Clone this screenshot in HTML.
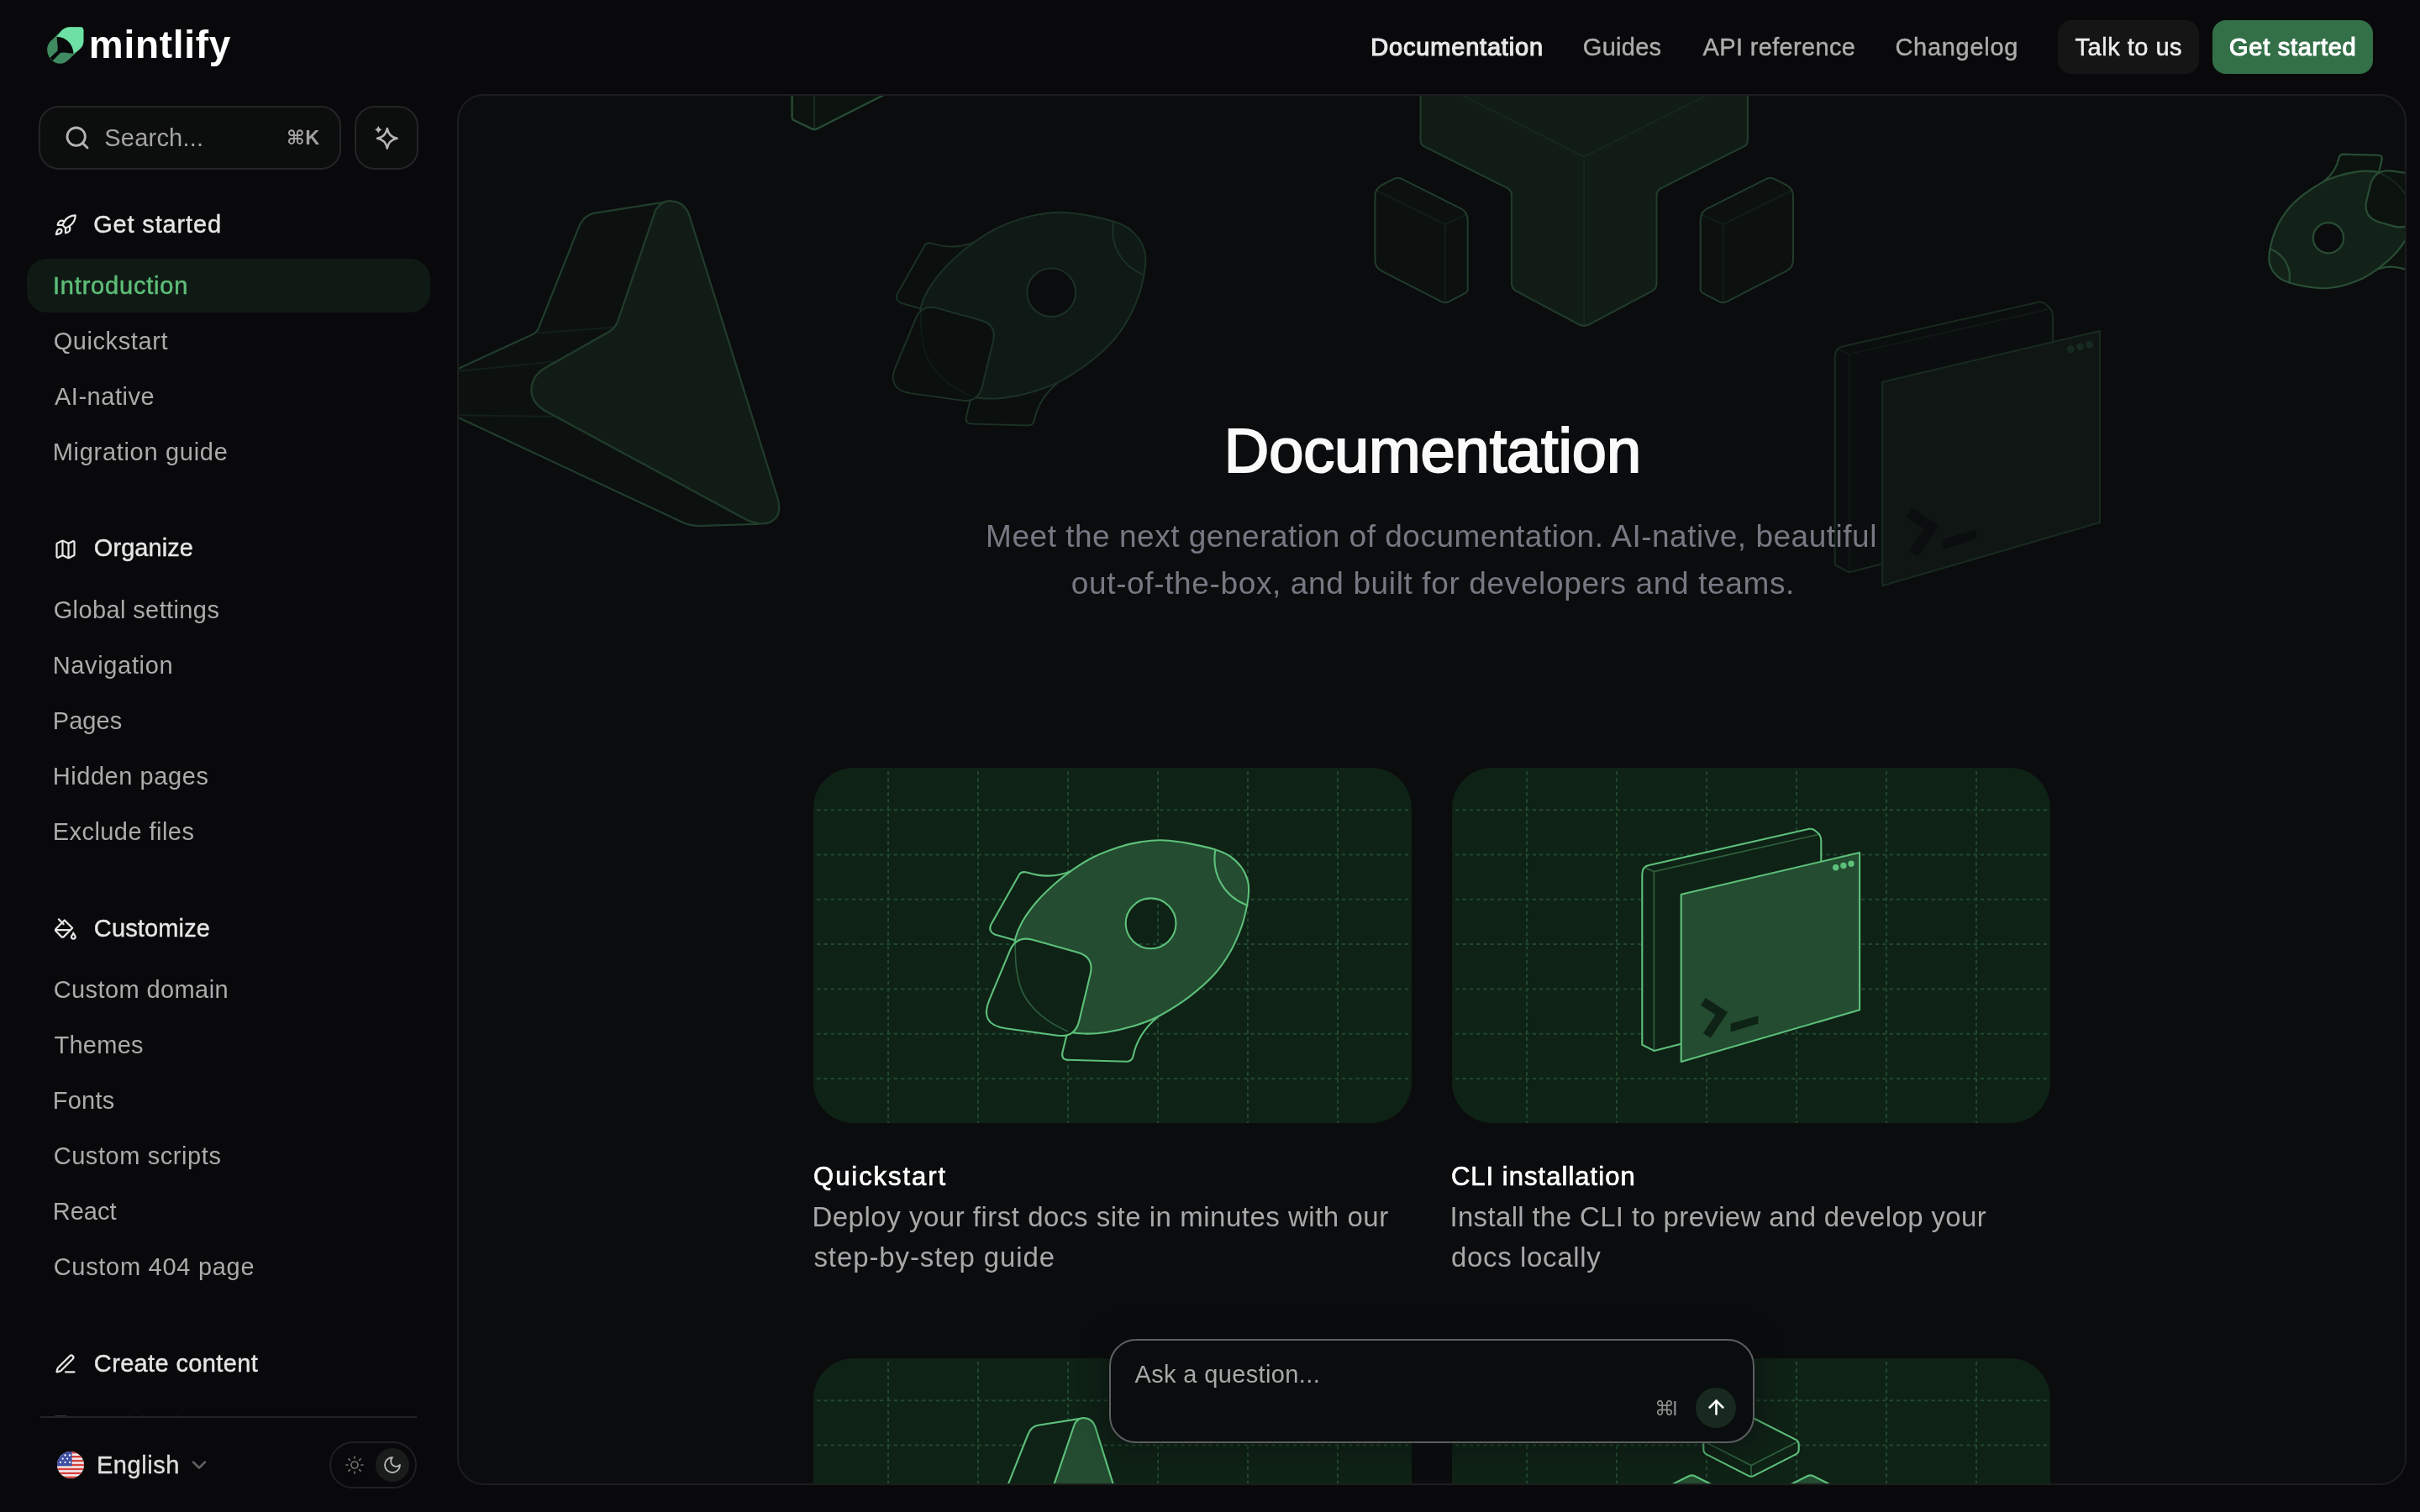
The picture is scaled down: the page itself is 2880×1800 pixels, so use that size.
<!DOCTYPE html>
<html lang="en">
<head>
<meta charset="utf-8">
<title>Introduction - Mintlify</title>
<style>

*{box-sizing:border-box;margin:0;padding:0}
html,body{width:2880px;height:1800px;overflow:hidden;background:#09090b}
body{position:relative;font-family:"Liberation Sans","DejaVu Sans",sans-serif;color:#9c9c9c}
a{text-decoration:none}
ul{list-style:none}
h1,h2,h5,p,li{font-weight:400}
.t{position:absolute;white-space:nowrap;line-height:1;display:block}
svg{position:absolute;display:block;overflow:visible}
.ic{fill:none;stroke-linecap:round;stroke-linejoin:round}
header.top,aside.side,.pc{position:absolute;left:0;top:0;width:0;height:0;will-change:transform}
.pc{left:-546px;top:-114px}
.btn{position:absolute;top:24px;height:64px;border-radius:16px}
.btn.talk{left:2449px;width:168px;background:#151516}
.btn.start{left:2633px;width:191px;background:#336f47}
.search{position:absolute;left:46px;top:126px;width:360px;height:76px;border:2px solid #242528;border-radius:24px;background:#0c0d0d}
.aibtn{position:absolute;left:422px;top:126px;width:76px;height:76px;border:2px solid #242528;border-radius:24px;background:#0c0d0d}
.kbd{font-size:23.5px;font-weight:700;color:#a0a0a0;letter-spacing:.4px}
.pill{position:absolute;left:32px;top:308px;width:480px;height:64px;border-radius:24px;background:#101a15}
.sidefoot{position:absolute;left:0;top:1686px;width:544px;height:114px;background:#09090b}
.rule{position:absolute;left:48px;top:1686px;width:448px;height:2px;background:#222326}
.toggle{position:absolute;left:392px;top:1716px;width:104px;height:56px;border:2px solid #1f2022;border-radius:28px}
.moonbg{position:absolute;left:447px;top:1724px;width:40px;height:40px;border-radius:50%;background:#1a1c1c}
main.panel{position:absolute;left:544px;top:112px;width:2320px;height:1656px;border:2px solid #1c1d1f;border-radius:32px;background:#0b0c0e;overflow:hidden}
.ask{position:absolute;left:1320px;top:1594px;width:768px;height:124px;border:2px solid #5c5e60;border-radius:32px;background:#0a0d0e;box-shadow:0 0 28px 6px rgba(9,12,13,.5)}
.kbd2{font-size:24px;font-weight:400;color:#8c8c8c;letter-spacing:-3px}
.send{position:absolute;left:2018px;top:1652px;width:48px;height:48px;border-radius:50%;background:#182a1f}

</style>
</head>
<body>
<header class="top">
<svg style="left:48px;top:24px" width="64" height="60" viewBox="0 0 1613 1512"><path d="M205 850C215 730 280 640 380 560L640 310C720 235 790 205 880 205H1200C1265 205 1295 240 1295 300V610C1295 720 1270 790 1190 860L930 1110C830 1220 720 1305 600 1305C380 1305 195 1110 205 850Z" fill="#3f8a61"/><path d="M490 500L640 310C720 235 790 205 880 205H1200C1265 205 1295 240 1295 300V610C1295 720 1270 790 1190 860L1000 1010C990 760 780 500 490 500Z" fill="#6de0a4"/><path d="M500 505C780 505 990 740 990 1000C870 1000 720 940 600 985L370 1215L290 1130L510 925C545 800 490 680 500 505Z" fill="#09090b"/></svg>
<a class="t logo" style="left:105.83px;top:30.00px;font-size:46px;letter-spacing:0.717px;color:#ffffff;font-weight:700;">mintlify</a>
<nav>
<a class="t" style="left:1631.33px;top:41.50px;font-size:29px;letter-spacing:0.803px;color:#e8e8e8;-webkit-text-stroke:1.2px #e8e8e8;">Documentation</a>
<a class="t" style="left:1883.84px;top:41.50px;font-size:29px;letter-spacing:0.276px;color:#adadad;-webkit-text-stroke:0.4px #adadad;">Guides</a>
<a class="t" style="left:2026.60px;top:41.50px;font-size:29px;letter-spacing:0.338px;color:#adadad;-webkit-text-stroke:0.4px #adadad;">API reference</a>
<a class="t" style="left:2255.44px;top:41.50px;font-size:29px;letter-spacing:0.713px;color:#adadad;-webkit-text-stroke:0.4px #adadad;">Changelog</a>
</nav>
<div class="btn talk"></div><a class="t" style="left:2469.60px;top:41.50px;font-size:29px;letter-spacing:0.496px;color:#ededed;-webkit-text-stroke:0.5px #ededed;">Talk to us</a>
<div class="btn start"></div><a class="t" style="left:2653.04px;top:41.50px;font-size:29px;letter-spacing:0.723px;color:#ffffff;-webkit-text-stroke:1.2px #ffffff;">Get started</a>
</header>
<aside class="side">
<div class="search"></div><svg class="ic" style="left:76.1px;top:148.0px" width="32" height="32" viewBox="0 0 24 24" stroke="#b5b5b5" stroke-width="2.1"><circle cx="11" cy="11" r="8"/><path d="m21 21-4.3-4.3"/></svg>
<div class="t" style="left:124.19px;top:149.50px;font-size:29px;letter-spacing:0.234px;color:#a5a5a5;">Search...</div>
<div class="t kbd" style="left:341px;top:153px;">⌘K</div>
<div class="aibtn"></div><svg style="left:0;top:0" width="2880" height="1800" viewBox="0 0 2880 1800"><path d="M460.8 153.0C462.0 159.5 466.1 163.6 472.6 164.8C466.1 166.0 462.0 170.1 460.8 176.6C459.6 170.1 455.5 166.0 449.0 164.8C455.5 163.6 459.6 159.5 460.8 153.0Z" fill="none" stroke="#b4b4b4" stroke-width="2.6" stroke-linejoin="round"/><path d="M450.3 149.7C450.8 151.9 452.7 153.8 454.9 154.3C452.7 154.8 450.8 156.7 450.3 158.9C449.8 156.7 447.9 154.8 445.7 154.3C447.9 153.8 449.8 151.9 450.3 149.7Z" fill="#b4b4b4"/></svg>
<div class="pill"></div>
<svg class="ic" style="left:64px;top:254px" width="28" height="28" viewBox="0 0 24 24" stroke="#e6e6e6" stroke-width="1.9"><path d="M4.5 16.5c-1.5 1.26-2 5-2 5s3.74-.5 5-2c.71-.84.7-2.13-.09-2.91a2.18 2.18 0 0 0-2.91-.09z"/><path d="m12 15-3-3a22 22 0 0 1 2-3.95A12.88 12.88 0 0 1 22 2c0 2.72-.78 7.5-6 11a22.35 22.35 0 0 1-4 2z"/><path d="M9 12H4s.55-3.03 2-4c1.62-1.08 5 0 5 0"/><path d="M12 15v5s3.03-.55 4-2c1.08-1.62 0-5 0-5"/></svg><h5 class="t" style="left:111.24px;top:252.50px;font-size:29px;letter-spacing:0.833px;color:#e6e6e6;-webkit-text-stroke:0.4px #e6e6e6;">Get started</h5>
<ul>
<li class="t" style="left:62.98px;top:325.50px;font-size:29px;letter-spacing:0.805px;color:#5dbe78;-webkit-text-stroke:0.5px #5dbe78;">Introduction</li>
<li class="t" style="left:63.64px;top:391.50px;font-size:29px;letter-spacing:0.592px;color:#ababab;">Quickstart</li>
<li class="t" style="left:65.00px;top:457.50px;font-size:29px;letter-spacing:0.517px;color:#ababab;">AI-native</li>
<li class="t" style="left:62.73px;top:523.50px;font-size:29px;letter-spacing:0.697px;color:#ababab;">Migration guide</li>
</ul>
<svg class="ic" style="left:64px;top:640px" width="28" height="28" viewBox="0 0 24 24" stroke="#e6e6e6" stroke-width="1.9"><path d="M14.106 5.553a2 2 0 0 0 1.788 0l3.659-1.83A1 1 0 0 1 21 4.619v12.764a1 1 0 0 1-.553.894l-4.553 2.277a2 2 0 0 1-1.788 0l-4.212-2.106a2 2 0 0 0-1.788 0l-3.659 1.83A1 1 0 0 1 3 19.381V6.618a1 1 0 0 1 .553-.894l4.553-2.277a2 2 0 0 1 1.788 0z"/><path d="M15 5.764v15"/><path d="M9 3.236v15"/></svg><h5 class="t" style="left:111.84px;top:637.50px;font-size:29px;letter-spacing:0.066px;color:#e6e6e6;-webkit-text-stroke:0.4px #e6e6e6;">Organize</h5>
<ul>
<li class="t" style="left:63.64px;top:711.50px;font-size:29px;letter-spacing:0.388px;color:#ababab;">Global settings</li>
<li class="t" style="left:62.73px;top:777.50px;font-size:29px;letter-spacing:0.652px;color:#ababab;">Navigation</li>
<li class="t" style="left:62.73px;top:843.50px;font-size:29px;letter-spacing:0.086px;color:#ababab;">Pages</li>
<li class="t" style="left:62.73px;top:909.50px;font-size:29px;letter-spacing:0.564px;color:#ababab;">Hidden pages</li>
<li class="t" style="left:62.73px;top:975.50px;font-size:29px;letter-spacing:0.448px;color:#ababab;">Exclude files</li>
</ul>
<svg class="ic" style="left:64px;top:1092px" width="28" height="28" viewBox="0 0 24 24" stroke="#e6e6e6" stroke-width="1.9"><path d="m19 11-8-8-8.6 8.6a2 2 0 0 0 0 2.8l5.2 5.2c.8.8 2 .8 2.8 0L19 11Z"/><path d="m5 2 5 5"/><path d="M2 13h15"/><path d="M22 20a2 2 0 1 1-4 0c0-1.6 1.7-2.4 2-4 .3 1.6 2 2.4 2 4Z"/></svg><h5 class="t" style="left:111.84px;top:1090.50px;font-size:29px;letter-spacing:0.144px;color:#e6e6e6;-webkit-text-stroke:0.4px #e6e6e6;">Customize</h5>
<ul>
<li class="t" style="left:63.64px;top:1163.50px;font-size:29px;letter-spacing:0.409px;color:#ababab;">Custom domain</li>
<li class="t" style="left:64.55px;top:1229.50px;font-size:29px;letter-spacing:0.241px;color:#ababab;">Themes</li>
<li class="t" style="left:62.73px;top:1295.50px;font-size:29px;letter-spacing:0.261px;color:#ababab;">Fonts</li>
<li class="t" style="left:63.64px;top:1361.50px;font-size:29px;letter-spacing:0.578px;color:#ababab;">Custom scripts</li>
<li class="t" style="left:62.73px;top:1427.50px;font-size:29px;letter-spacing:0.002px;color:#ababab;">React</li>
<li class="t" style="left:63.64px;top:1493.50px;font-size:29px;letter-spacing:0.715px;color:#ababab;">Custom 404 page</li>
</ul>
<svg class="ic" style="left:64px;top:1610px" width="28" height="28" viewBox="0 0 24 24" stroke="#e6e6e6" stroke-width="1.9"><path d="M12 20h9"/><path d="M16.376 3.622a1 1 0 0 1 3.002 3.002L7.368 18.635a2 2 0 0 1-.855.506l-2.872.838a.5.5 0 0 1-.62-.62l.838-2.872a2 2 0 0 1 .506-.854z"/></svg><h5 class="t" style="left:111.84px;top:1608.50px;font-size:29px;letter-spacing:0.356px;color:#e6e6e6;-webkit-text-stroke:0.4px #e6e6e6;">Create content</h5>
<ul><li class="t" style="left:63px;top:1681px;font-size:29px;letter-spacing:.5px;color:#9c9c9c;opacity:.3">Format text</li></ul>
<div class="sidefoot"></div>
<div class="rule"></div>
<svg style="left:68px;top:1728px" width="32" height="32" viewBox="0 0 32 32"><defs><clipPath id="fc"><circle cx="16" cy="16" r="16"/></clipPath></defs><g clip-path="url(#fc)"><rect width="32" height="32" fill="#f0f0f0"/><rect x="0" y="0.00" width="32" height="2.46" fill="#d8413f"/><rect x="0" y="4.92" width="32" height="2.46" fill="#d8413f"/><rect x="0" y="9.85" width="32" height="2.46" fill="#d8413f"/><rect x="0" y="14.77" width="32" height="2.46" fill="#d8413f"/><rect x="0" y="19.69" width="32" height="2.46" fill="#d8413f"/><rect x="0" y="24.62" width="32" height="2.46" fill="#d8413f"/><rect x="0" y="29.54" width="32" height="2.46" fill="#d8413f"/><rect x="0" y="0" width="17.5" height="17.2" fill="#3c4fa3"/><circle cx="4" cy="4.5" r="1.15" fill="#fff"/><circle cx="9.5" cy="4.5" r="1.15" fill="#fff"/><circle cx="15" cy="4.5" r="1.15" fill="#fff"/><circle cx="6.7" cy="8.6" r="1.15" fill="#fff"/><circle cx="12.2" cy="8.6" r="1.15" fill="#fff"/><circle cx="4" cy="12.8" r="1.15" fill="#fff"/><circle cx="9.5" cy="12.8" r="1.15" fill="#fff"/><circle cx="15" cy="12.8" r="1.15" fill="#fff"/></g></svg>
<div class="t" style="left:114.93px;top:1729.50px;font-size:29px;letter-spacing:0.563px;color:#dddddd;-webkit-text-stroke:0.4px #dddddd;">English</div>
<svg class="ic" style="left:223px;top:1730px" width="28" height="28" viewBox="0 0 24 24" stroke="#5f5f5f" stroke-width="2.2"><path d="m6 9 6 6 6-6"/></svg>
<div class="toggle"></div><span class="moonbg"></span><svg class="ic" style="left:410px;top:1732px" width="24" height="24" viewBox="0 0 24 24" stroke="#707070" stroke-width="1.7"><circle cx="12" cy="12" r="4"/><path d="M12 2v2"/><path d="M12 20v2"/><path d="m4.93 4.93 1.41 1.41"/><path d="m17.66 17.66 1.41 1.41"/><path d="M2 12h2"/><path d="M20 12h2"/><path d="m6.34 17.66-1.41 1.41"/><path d="m19.07 4.93-1.41 1.41"/></svg><svg class="ic" style="left:455px;top:1732px" width="24" height="24" viewBox="0 0 24 24" stroke="#b8b8b8" stroke-width="1.8"><path d="M12 3a6 6 0 0 0 9 9 9 9 0 1 1-9-9Z"/></svg>
</aside>
<main class="panel">
<div class="pc">
<svg style="left:0;top:0" width="2880" height="1800" viewBox="0 0 2880 1800"><defs><linearGradient id="fd" gradientUnits="userSpaceOnUse" x1="0" y1="360" x2="0" y2="720"><stop offset="0" stop-color="#fff" stop-opacity="1"/><stop offset="1" stop-color="#fff" stop-opacity=".12"/></linearGradient><mask id="mfd" maskUnits="userSpaceOnUse" x="2100" y="300" width="500" height="500"><rect x="2100" y="300" width="500" height="500" fill="url(#fd)"/></mask></defs><g opacity=".27"><path d="M798.8 239.3L707.8 253.6Q694 256 687.9 272.6L640.9 390.6Q639 395.5 634 398L440 487.6L440 447.8L807.3 619.5Q818 625.5 830.1 626.1L902.6 623.8L920 600L810 250Z" fill="#0f2216" stroke="#5dc07a" stroke-width="2.2" stroke-linejoin="round" stroke-linecap="round"/><path d="M639.5 396.3L729.1 389.8M440 452.4L659.4 430.4M440 492.7L659.4 495.8" fill="none" stroke="#5dc07a" stroke-opacity=".35" stroke-width="1.76"/><path d="M780.3 249.9Q789 238 798.8 239.3Q814 240 820.1 255.5L925.3 592.5Q930 607 923.9 616Q916 625 902.6 623.2Q895 622 888 618.5L648.1 488.7Q632 479 632.4 463.1Q633 447 649.5 437.5L722 396.5Q731 392 734.8 383.5Z" fill="#234c31" stroke="#5dc07a" stroke-width="2.2" stroke-linejoin="round" stroke-linecap="round"/></g><g transform="matrix(0.963 0 0 0.963 -67.71 -710.49)" opacity="0.21"><path d="M1277.6 1035.6C1262 1043 1245 1046 1222 1038.5Q1215 1037 1212.5 1042L1179.5 1100.5Q1175.5 1108.5 1184 1112.5L1207.7 1119.2L1240 1100Z" fill="#0f2216" stroke="#5dc07a" stroke-width="2.0" stroke-linejoin="round" stroke-linecap="round"/><path d="M1270.2 1229.3L1264.5 1252.6Q1262.5 1261.5 1271 1261.8L1341.1 1263.8Q1347 1263.5 1348.5 1257.5C1352 1240 1362 1224 1377.1 1211.3L1330 1200Z" fill="#0f2216" stroke="#5dc07a" stroke-width="2.0" stroke-linejoin="round" stroke-linecap="round"/><path d="M1381.9 1000.3C1391.6 1000.6 1404.2 1002.2 1415.0 1004.1C1425.8 1006.0 1438.1 1008.9 1446.4 1011.5C1454.7 1014.1 1459.4 1016.2 1464.6 1019.8C1469.8 1023.4 1474.4 1028.3 1477.8 1033.0C1481.2 1037.7 1483.4 1043.2 1484.8 1047.9C1486.2 1052.6 1486.2 1056.1 1486.1 1061.1C1486.0 1066.1 1485.5 1070.8 1484.1 1077.7C1482.7 1084.6 1481.0 1093.4 1477.8 1102.5C1474.5 1111.6 1470.1 1122.6 1464.6 1132.2C1459.1 1141.8 1453.1 1151.2 1444.8 1160.3C1436.5 1169.4 1426.0 1178.5 1415.0 1186.8C1404.0 1195.1 1389.6 1204.2 1378.6 1210.0C1367.6 1215.8 1359.3 1218.3 1348.8 1221.5C1338.3 1224.7 1325.2 1227.5 1315.8 1229.0C1306.4 1230.5 1300.0 1230.8 1292.6 1230.6C1285.1 1230.4 1278.3 1230.4 1271.1 1228.1C1263.9 1225.8 1256.5 1221.3 1249.6 1216.6C1242.7 1211.9 1235.3 1206.1 1229.8 1200.0C1224.3 1193.9 1219.8 1187.6 1216.5 1180.2C1213.2 1172.8 1211.3 1163.7 1209.9 1155.4C1208.5 1147.1 1208.6 1136.9 1208.3 1130.6C1208.0 1124.2 1206.9 1122.8 1208.3 1117.3C1209.7 1111.8 1212.4 1104.7 1216.5 1097.5C1220.6 1090.3 1226.8 1081.8 1233.1 1074.3C1239.4 1066.8 1247.2 1059.4 1254.6 1052.8C1262.0 1046.2 1269.7 1040.2 1277.7 1034.7C1285.7 1029.2 1293.4 1024.2 1302.5 1019.8C1311.6 1015.4 1323.2 1011.1 1332.3 1008.2C1341.4 1005.3 1348.8 1003.7 1357.1 1002.4C1365.4 1001.1 1372.2 1000.0 1381.9 1000.3ZM1339.7 1099.3A29.9 29.9 0 1 0 1399.5 1099.3A29.9 29.9 0 1 0 1339.7 1099.3Z" fill="#234c31" fill-rule="evenodd" stroke="#5dc07a" stroke-width="2.0" stroke-linejoin="round" stroke-linecap="round"/><path d="M1201.8 1131.9Q1209.5 1113.5 1228.8 1118.8L1282.3 1133.7Q1302.5 1139.3 1297.6 1159.7L1284.3 1215.2Q1279.4 1235.6 1258.6 1232.7L1196.7 1224.2Q1165.0 1219.8 1177.4 1190.3Z" fill="#0f2216" stroke="#5dc07a" stroke-width="2.0" stroke-linejoin="round" stroke-linecap="round"/><path d="M1208.3 1117.3C1208.3 1119.5 1208.0 1124.2 1208.3 1130.6C1208.6 1136.9 1208.5 1147.1 1209.9 1155.4C1211.3 1163.7 1213.2 1172.8 1216.5 1180.2C1219.8 1187.6 1224.3 1193.9 1229.8 1200.0C1235.3 1206.1 1242.7 1211.9 1249.6 1216.6C1256.5 1221.3 1267.5 1226.2 1271.1 1228.1" fill="none" stroke="#5dc07a" stroke-opacity=".38" stroke-width="1.60"/><path d="M1446.4 1011.5C1441.5 1040 1456 1067 1484.1 1077.7" fill="none" stroke="#5dc07a" stroke-width="2.0" stroke-linejoin="round" stroke-linecap="round"/></g><g opacity=".27"><path d="M1690.5 100L1690.5 167.5Q1690.5 173 1697 175.4L1794.1 224.2Q1798.9 227 1798.9 233L1798.9 337Q1799 344 1804.9 346.9L1879.2 386.4Q1885.2 389.5 1891.2 386.4L1965.5 346.9Q1971.5 344 1971.5 337L1971.5 233Q1971.5 227 1976.8 224.2L2073.4 175.4Q2079.9 173 2079.9 167.5L2079.9 100Z" fill="#234c31" stroke="#5dc07a" stroke-width="2.0" stroke-linejoin="round" stroke-linecap="round"/><path d="M1713.8 100L1885.2 186.8L2057.6 100M1885.2 186.8V389" fill="none" stroke="#5dc07a" stroke-opacity=".35" stroke-width="1.60"/><path d="M1659.1 212.8Q1663.5 210.5 1668.0 212.8L1738.7 248.4Q1746.7 252.5 1746.7 261.5L1746.7 344.5Q1746.7 347.5 1744.0 348.9L1724.2 359.2Q1719.8 361.5 1715.4 359.2L1644.4 322.6Q1636.4 318.5 1636.4 309.5L1636.4 233.5Q1636.4 224.5 1644.4 220.4Z" fill="#0f2216" stroke="#5dc07a" stroke-width="2.0" stroke-linejoin="round" stroke-linecap="round"/><path d="M1638.3 227.0L1719.8 267.0L1745.5 255.3M1719.8 267.0V360" fill="none" stroke="#5dc07a" stroke-opacity=".35" stroke-width="1.60"/><path d="M2111.3 212.8Q2106.9 210.5 2102.4 212.8L2031.7 248.4Q2023.7 252.5 2023.7 261.5L2023.7 344.5Q2023.7 347.5 2026.4 348.9L2046.2 359.2Q2050.6 361.5 2055.0 359.2L2126.0 322.6Q2134.0 318.5 2134.0 309.5L2134.0 233.5Q2134.0 224.5 2126.0 220.4Z" fill="#0f2216" stroke="#5dc07a" stroke-width="2.0" stroke-linejoin="round" stroke-linecap="round"/><path d="M2132.1 227.0L2050.6 267.0L2024.9 255.3M2050.6 267.0V360" fill="none" stroke="#5dc07a" stroke-opacity=".35" stroke-width="1.60"/></g><g opacity=".36"><path d="M942.6 100L942.6 139.5Q942.6 142 945 143.2L965.5 153.2Q969 155 972.5 153.2L1077.5 100Z" fill="#0f2216" stroke="#5dc07a" stroke-width="2.4" stroke-linejoin="round" stroke-linecap="round"/><path d="M969 100V154" fill="none" stroke="#5dc07a" stroke-opacity=".4" stroke-width="2.16"/></g><g transform="matrix(1.218 0 0 1.218 -196.65 -842.23)" opacity="0.17"><path d="M1954.3 1041Q1954.3 1031.5 1962.5 1030L2153.1 986.8Q2158 986 2162.2 990.6Q2167.3 994 2167.3 1001L2167.3 1200L1968.4 1250.9L1954.3 1243.7Z" fill="#0f2216" stroke="#5dc07a" stroke-width="1.7" stroke-linejoin="round" stroke-linecap="round"/><path d="M1958.5 1033.5L1968.4 1037.5L2164 993.5M1968.4 1037.5V1250.9" fill="none" stroke="#5dc07a" stroke-opacity=".4" stroke-width="1.36"/><path d="M2000.7 1064.8L2213.1 1015L2213.1 1202.2L2000.7 1264Z" fill="#234c31" stroke="#5dc07a" stroke-width="1.7" stroke-linejoin="round" stroke-linecap="round"/><circle cx="2184.7" cy="1032.7" r="3.7" fill="#5dc07a"/><circle cx="2193.9" cy="1030.5" r="3.7" fill="#5dc07a"/><circle cx="2203.0" cy="1028.3" r="3.7" fill="#5dc07a"/><path d="M2026.9 1192.4L2048.8 1206.6L2031.3 1232.8" fill="none" stroke="#0f2216" stroke-width="10.5" stroke-linejoin="miter"/><path d="M2059.7 1218.6L2092.4 1209.2L2092.4 1218.6L2059.7 1228.4Z" fill="#0f2216"/></g><g transform="matrix(-0.606 0 0 -0.606 3600.90 949.40)" opacity="0.36"><path d="M1277.6 1035.6C1262 1043 1245 1046 1222 1038.5Q1215 1037 1212.5 1042L1179.5 1100.5Q1175.5 1108.5 1184 1112.5L1207.7 1119.2L1240 1100Z" fill="#0f2216" stroke="#5dc07a" stroke-width="3.6" stroke-linejoin="round" stroke-linecap="round"/><path d="M1270.2 1229.3L1264.5 1252.6Q1262.5 1261.5 1271 1261.8L1341.1 1263.8Q1347 1263.5 1348.5 1257.5C1352 1240 1362 1224 1377.1 1211.3L1330 1200Z" fill="#0f2216" stroke="#5dc07a" stroke-width="3.6" stroke-linejoin="round" stroke-linecap="round"/><path d="M1381.9 1000.3C1391.6 1000.6 1404.2 1002.2 1415.0 1004.1C1425.8 1006.0 1438.1 1008.9 1446.4 1011.5C1454.7 1014.1 1459.4 1016.2 1464.6 1019.8C1469.8 1023.4 1474.4 1028.3 1477.8 1033.0C1481.2 1037.7 1483.4 1043.2 1484.8 1047.9C1486.2 1052.6 1486.2 1056.1 1486.1 1061.1C1486.0 1066.1 1485.5 1070.8 1484.1 1077.7C1482.7 1084.6 1481.0 1093.4 1477.8 1102.5C1474.5 1111.6 1470.1 1122.6 1464.6 1132.2C1459.1 1141.8 1453.1 1151.2 1444.8 1160.3C1436.5 1169.4 1426.0 1178.5 1415.0 1186.8C1404.0 1195.1 1389.6 1204.2 1378.6 1210.0C1367.6 1215.8 1359.3 1218.3 1348.8 1221.5C1338.3 1224.7 1325.2 1227.5 1315.8 1229.0C1306.4 1230.5 1300.0 1230.8 1292.6 1230.6C1285.1 1230.4 1278.3 1230.4 1271.1 1228.1C1263.9 1225.8 1256.5 1221.3 1249.6 1216.6C1242.7 1211.9 1235.3 1206.1 1229.8 1200.0C1224.3 1193.9 1219.8 1187.6 1216.5 1180.2C1213.2 1172.8 1211.3 1163.7 1209.9 1155.4C1208.5 1147.1 1208.6 1136.9 1208.3 1130.6C1208.0 1124.2 1206.9 1122.8 1208.3 1117.3C1209.7 1111.8 1212.4 1104.7 1216.5 1097.5C1220.6 1090.3 1226.8 1081.8 1233.1 1074.3C1239.4 1066.8 1247.2 1059.4 1254.6 1052.8C1262.0 1046.2 1269.7 1040.2 1277.7 1034.7C1285.7 1029.2 1293.4 1024.2 1302.5 1019.8C1311.6 1015.4 1323.2 1011.1 1332.3 1008.2C1341.4 1005.3 1348.8 1003.7 1357.1 1002.4C1365.4 1001.1 1372.2 1000.0 1381.9 1000.3ZM1339.7 1099.3A29.9 29.9 0 1 0 1399.5 1099.3A29.9 29.9 0 1 0 1339.7 1099.3Z" fill="#234c31" fill-rule="evenodd" stroke="#5dc07a" stroke-width="3.6" stroke-linejoin="round" stroke-linecap="round"/><path d="M1196.4 1144.9Q1209.5 1113.5 1242.3 1122.6L1268.1 1129.8Q1302.5 1139.3 1294.2 1174.0L1287.7 1200.9Q1279.4 1235.6 1244.0 1230.7L1218.9 1227.2Q1165.0 1219.8 1186.0 1169.6Z" fill="#0f2216" stroke="#5dc07a" stroke-width="3.6" stroke-linejoin="round" stroke-linecap="round"/><path d="M1208.3 1117.3C1208.3 1119.5 1208.0 1124.2 1208.3 1130.6C1208.6 1136.9 1208.5 1147.1 1209.9 1155.4C1211.3 1163.7 1213.2 1172.8 1216.5 1180.2C1219.8 1187.6 1224.3 1193.9 1229.8 1200.0C1235.3 1206.1 1242.7 1211.9 1249.6 1216.6C1256.5 1221.3 1267.5 1226.2 1271.1 1228.1" fill="none" stroke="#5dc07a" stroke-opacity=".38" stroke-width="2.88"/><path d="M1446.4 1011.5C1441.5 1040 1456 1067 1484.1 1077.7" fill="none" stroke="#5dc07a" stroke-width="3.6" stroke-linejoin="round" stroke-linecap="round"/></g></svg>
<h1 class="t" style="left:1456.82px;top:499.50px;font-size:74px;letter-spacing:-0.124px;color:#fafafa;-webkit-text-stroke:2.0px #fafafa;">Documentation</h1>
<p class="t" style="left:1173.11px;top:620.00px;font-size:37px;letter-spacing:0.514px;color:#777882;">Meet the next generation of documentation. AI-native, beautiful</p>
<p class="t" style="left:1274.84px;top:676.00px;font-size:37px;letter-spacing:0.633px;color:#777882;">out-of-the-box, and built for developers and teams.</p>
<svg style="left:0;top:0" width="2880" height="1800" viewBox="0 0 2880 1800"><defs></defs><clipPath id="cc1"><rect x="968" y="914" width="712" height="423" rx="48"/></clipPath><g clip-path="url(#cc1)"><rect x="968" y="914" width="712" height="423" fill="#0f2216"/><path d="M1057.0 914V1337M1164.0 914V1337M1271.0 914V1337M1378.0 914V1337M1485.0 914V1337M1592.0 914V1337M968 964.2H1680M968 1017.5H1680M968 1070.8H1680M968 1124.1H1680M968 1177.4H1680M968 1230.7H1680M968 1284.0H1680" fill="none" stroke="#214a2d" stroke-width="2" stroke-dasharray="4.2 4.13" stroke-dashoffset="-4.15"/><path d="M1277.6 1035.6C1262 1043 1245 1046 1222 1038.5Q1215 1037 1212.5 1042L1179.5 1100.5Q1175.5 1108.5 1184 1112.5L1207.7 1119.2L1240 1100Z" fill="#0f2216" stroke="#5dc07a" stroke-width="2.1" stroke-linejoin="round" stroke-linecap="round"/><path d="M1270.2 1229.3L1264.5 1252.6Q1262.5 1261.5 1271 1261.8L1341.1 1263.8Q1347 1263.5 1348.5 1257.5C1352 1240 1362 1224 1377.1 1211.3L1330 1200Z" fill="#0f2216" stroke="#5dc07a" stroke-width="2.1" stroke-linejoin="round" stroke-linecap="round"/><path d="M1381.9 1000.3C1391.6 1000.6 1404.2 1002.2 1415.0 1004.1C1425.8 1006.0 1438.1 1008.9 1446.4 1011.5C1454.7 1014.1 1459.4 1016.2 1464.6 1019.8C1469.8 1023.4 1474.4 1028.3 1477.8 1033.0C1481.2 1037.7 1483.4 1043.2 1484.8 1047.9C1486.2 1052.6 1486.2 1056.1 1486.1 1061.1C1486.0 1066.1 1485.5 1070.8 1484.1 1077.7C1482.7 1084.6 1481.0 1093.4 1477.8 1102.5C1474.5 1111.6 1470.1 1122.6 1464.6 1132.2C1459.1 1141.8 1453.1 1151.2 1444.8 1160.3C1436.5 1169.4 1426.0 1178.5 1415.0 1186.8C1404.0 1195.1 1389.6 1204.2 1378.6 1210.0C1367.6 1215.8 1359.3 1218.3 1348.8 1221.5C1338.3 1224.7 1325.2 1227.5 1315.8 1229.0C1306.4 1230.5 1300.0 1230.8 1292.6 1230.6C1285.1 1230.4 1278.3 1230.4 1271.1 1228.1C1263.9 1225.8 1256.5 1221.3 1249.6 1216.6C1242.7 1211.9 1235.3 1206.1 1229.8 1200.0C1224.3 1193.9 1219.8 1187.6 1216.5 1180.2C1213.2 1172.8 1211.3 1163.7 1209.9 1155.4C1208.5 1147.1 1208.6 1136.9 1208.3 1130.6C1208.0 1124.2 1206.9 1122.8 1208.3 1117.3C1209.7 1111.8 1212.4 1104.7 1216.5 1097.5C1220.6 1090.3 1226.8 1081.8 1233.1 1074.3C1239.4 1066.8 1247.2 1059.4 1254.6 1052.8C1262.0 1046.2 1269.7 1040.2 1277.7 1034.7C1285.7 1029.2 1293.4 1024.2 1302.5 1019.8C1311.6 1015.4 1323.2 1011.1 1332.3 1008.2C1341.4 1005.3 1348.8 1003.7 1357.1 1002.4C1365.4 1001.1 1372.2 1000.0 1381.9 1000.3ZM1339.7 1099.3A29.9 29.9 0 1 0 1399.5 1099.3A29.9 29.9 0 1 0 1339.7 1099.3Z" fill="#234c31" fill-rule="evenodd" stroke="#5dc07a" stroke-width="2.1" stroke-linejoin="round" stroke-linecap="round"/><path d="M1201.8 1131.9Q1209.5 1113.5 1228.8 1118.8L1282.3 1133.7Q1302.5 1139.3 1297.6 1159.7L1284.3 1215.2Q1279.4 1235.6 1258.6 1232.7L1196.7 1224.2Q1165.0 1219.8 1177.4 1190.3Z" fill="#0f2216" stroke="#5dc07a" stroke-width="2.1" stroke-linejoin="round" stroke-linecap="round"/><path d="M1208.3 1117.3C1208.3 1119.5 1208.0 1124.2 1208.3 1130.6C1208.6 1136.9 1208.5 1147.1 1209.9 1155.4C1211.3 1163.7 1213.2 1172.8 1216.5 1180.2C1219.8 1187.6 1224.3 1193.9 1229.8 1200.0C1235.3 1206.1 1242.7 1211.9 1249.6 1216.6C1256.5 1221.3 1267.5 1226.2 1271.1 1228.1" fill="none" stroke="#5dc07a" stroke-opacity=".38" stroke-width="1.68"/><path d="M1446.4 1011.5C1441.5 1040 1456 1067 1484.1 1077.7" fill="none" stroke="#5dc07a" stroke-width="2.1" stroke-linejoin="round" stroke-linecap="round"/></g><clipPath id="cc2"><rect x="1728" y="914" width="712" height="423" rx="48"/></clipPath><g clip-path="url(#cc2)"><rect x="1728" y="914" width="712" height="423" fill="#0f2216"/><path d="M1817.0 914V1337M1924.0 914V1337M2031.0 914V1337M2138.0 914V1337M2245.0 914V1337M2352.0 914V1337M1728 964.2H2440M1728 1017.5H2440M1728 1070.8H2440M1728 1124.1H2440M1728 1177.4H2440M1728 1230.7H2440M1728 1284.0H2440" fill="none" stroke="#214a2d" stroke-width="2" stroke-dasharray="4.2 4.13" stroke-dashoffset="-4.15"/><path d="M1954.3 1041Q1954.3 1031.5 1962.5 1030L2153.1 986.8Q2158 986 2162.2 990.6Q2167.3 994 2167.3 1001L2167.3 1200L1968.4 1250.9L1954.3 1243.7Z" fill="#0f2216" stroke="#5dc07a" stroke-width="2.1" stroke-linejoin="round" stroke-linecap="round"/><path d="M1958.5 1033.5L1968.4 1037.5L2164 993.5M1968.4 1037.5V1250.9" fill="none" stroke="#5dc07a" stroke-opacity=".4" stroke-width="1.68"/><path d="M2000.7 1064.8L2213.1 1015L2213.1 1202.2L2000.7 1264Z" fill="#234c31" stroke="#5dc07a" stroke-width="2.1" stroke-linejoin="round" stroke-linecap="round"/><circle cx="2184.7" cy="1032.7" r="3.7" fill="#5dc07a"/><circle cx="2193.9" cy="1030.5" r="3.7" fill="#5dc07a"/><circle cx="2203.0" cy="1028.3" r="3.7" fill="#5dc07a"/><path d="M2026.9 1192.4L2048.8 1206.6L2031.3 1232.8" fill="none" stroke="#0f2216" stroke-width="10.5" stroke-linejoin="miter"/><path d="M2059.7 1218.6L2092.4 1209.2L2092.4 1218.6L2059.7 1228.4Z" fill="#0f2216"/></g><clipPath id="cc3"><rect x="968" y="1617" width="712" height="423" rx="48"/></clipPath><g clip-path="url(#cc3)"><rect x="968" y="1617" width="712" height="423" fill="#0f2216"/><path d="M1057.0 1617V2040M1164.0 1617V2040M1271.0 1617V2040M1378.0 1617V2040M1485.0 1617V2040M1592.0 1617V2040M968 1667.2H1680M968 1720.5H1680M968 1773.8H1680M968 1827.1H1680M968 1880.4H1680M968 1933.7H1680M968 1987.0H1680" fill="none" stroke="#214a2d" stroke-width="2" stroke-dasharray="4.2 4.13" stroke-dashoffset="-4.15"/><g transform="matrix(0.605 0 0 0.605 807.03 1543.32)"><path d="M798.8 239.3L707.8 253.6Q694 256 687.9 272.6L640.9 390.6Q639 395.5 634 398L440 487.6L440 447.8L807.3 619.5Q818 625.5 830.1 626.1L902.6 623.8L920 600L810 250Z" fill="#0f2216" stroke="#5dc07a" stroke-width="3.5" stroke-linejoin="round" stroke-linecap="round"/><path d="M639.5 396.3L729.1 389.8M440 452.4L659.4 430.4M440 492.7L659.4 495.8" fill="none" stroke="#5dc07a" stroke-opacity=".35" stroke-width="2.80"/><path d="M780.3 249.9Q789 238 798.8 239.3Q814 240 820.1 255.5L925.3 592.5Q930 607 923.9 616Q916 625 902.6 623.2Q895 622 888 618.5L648.1 488.7Q632 479 632.4 463.1Q633 447 649.5 437.5L722 396.5Q731 392 734.8 383.5Z" fill="#234c31" stroke="#5dc07a" stroke-width="3.5" stroke-linejoin="round" stroke-linecap="round"/></g></g><clipPath id="cc4"><rect x="1728" y="1617" width="712" height="423" rx="48"/></clipPath><g clip-path="url(#cc4)"><rect x="1728" y="1617" width="712" height="423" fill="#0f2216"/><path d="M1817.0 1617V2040M1924.0 1617V2040M2031.0 1617V2040M2138.0 1617V2040M2245.0 1617V2040M2352.0 1617V2040M1728 1667.2H2440M1728 1720.5H2440M1728 1773.8H2440M1728 1827.1H2440M1728 1880.4H2440M1728 1933.7H2440M1728 1987.0H2440" fill="none" stroke="#214a2d" stroke-width="2" stroke-dasharray="4.2 4.13" stroke-dashoffset="-4.15"/><path d="M2081.3 1688.2Q2084.0 1686.8 2086.7 1688.2L2137.1 1713.9Q2140.7 1715.7 2140.7 1719.7L2140.7 1725.6Q2140.7 1729.6 2137.1 1731.4L2086.7 1757.1Q2084.0 1758.5 2081.3 1757.1L2030.9 1731.4Q2027.3 1729.6 2027.3 1725.6L2027.3 1719.7Q2027.3 1715.7 2030.9 1713.9Z" fill="#0f2216" stroke="#5dc07a" stroke-width="2.1" stroke-linejoin="round" stroke-linecap="round"/><path d="M2028 1716L2084 1744.6L2140 1716M2084 1744.6V1758" fill="none" stroke="#5dc07a" stroke-opacity=".4" stroke-width="1.68"/><path d="M2009.8 1757.3Q2013.4 1755.5 2017.0 1757.3L2054.8 1776.2Q2058.4 1778.0 2054.8 1779.8L2017.0 1798.7Q2013.4 1800.5 2009.8 1798.7L1972.0 1779.8Q1968.4 1778.0 1972.0 1776.2Z" fill="#234c31" stroke="#5dc07a" stroke-width="2.1" stroke-linejoin="round" stroke-linecap="round"/><path d="M2150.9 1757.3Q2154.5 1755.5 2158.1 1757.3L2195.9 1776.2Q2199.5 1778.0 2195.9 1779.8L2158.1 1798.7Q2154.5 1800.5 2150.9 1798.7L2113.1 1779.8Q2109.5 1778.0 2113.1 1776.2Z" fill="#234c31" stroke="#5dc07a" stroke-width="2.1" stroke-linejoin="round" stroke-linecap="round"/></g></svg>
<h2 class="t" style="left:968.10px;top:1385.00px;font-size:31px;letter-spacing:1.935px;color:#ffffff;-webkit-text-stroke:0.7px #ffffff;">Quickstart</h2>
<p class="t" style="left:966.42px;top:1432.00px;font-size:33px;letter-spacing:0.514px;color:#a8a8a8;">Deploy your first docs site in minutes with our</p>
<p class="t" style="left:968.48px;top:1480.00px;font-size:33px;letter-spacing:0.886px;color:#a8a8a8;">step-by-step guide</p>
<h2 class="t" style="left:1726.90px;top:1385.00px;font-size:31px;letter-spacing:1.031px;color:#ffffff;-webkit-text-stroke:0.7px #ffffff;">CLI installation</h2>
<p class="t" style="left:1725.42px;top:1432.00px;font-size:33px;letter-spacing:0.346px;color:#a8a8a8;">Install the CLI to preview and develop your</p>
<p class="t" style="left:1726.97px;top:1480.00px;font-size:33px;letter-spacing:0.651px;color:#a8a8a8;">docs locally</p>
<div class="ask"></div>
<div class="t" style="left:1350.50px;top:1621.50px;font-size:29px;letter-spacing:0.364px;color:#a8a8a8;">Ask a question...</div>
<div class="t kbd2" style="left:1969px;top:1665px;">⌘I</div>
<div class="send"></div><svg class="ic" style="left:2028.5px;top:1662.3px" width="27" height="27" viewBox="0 0 24 24" stroke="#ffffff" stroke-width="2.3"><path d="m5 12 7-7 7 7"/><path d="M12 19V5"/></svg>
</div>
</main>
</body>
</html>
